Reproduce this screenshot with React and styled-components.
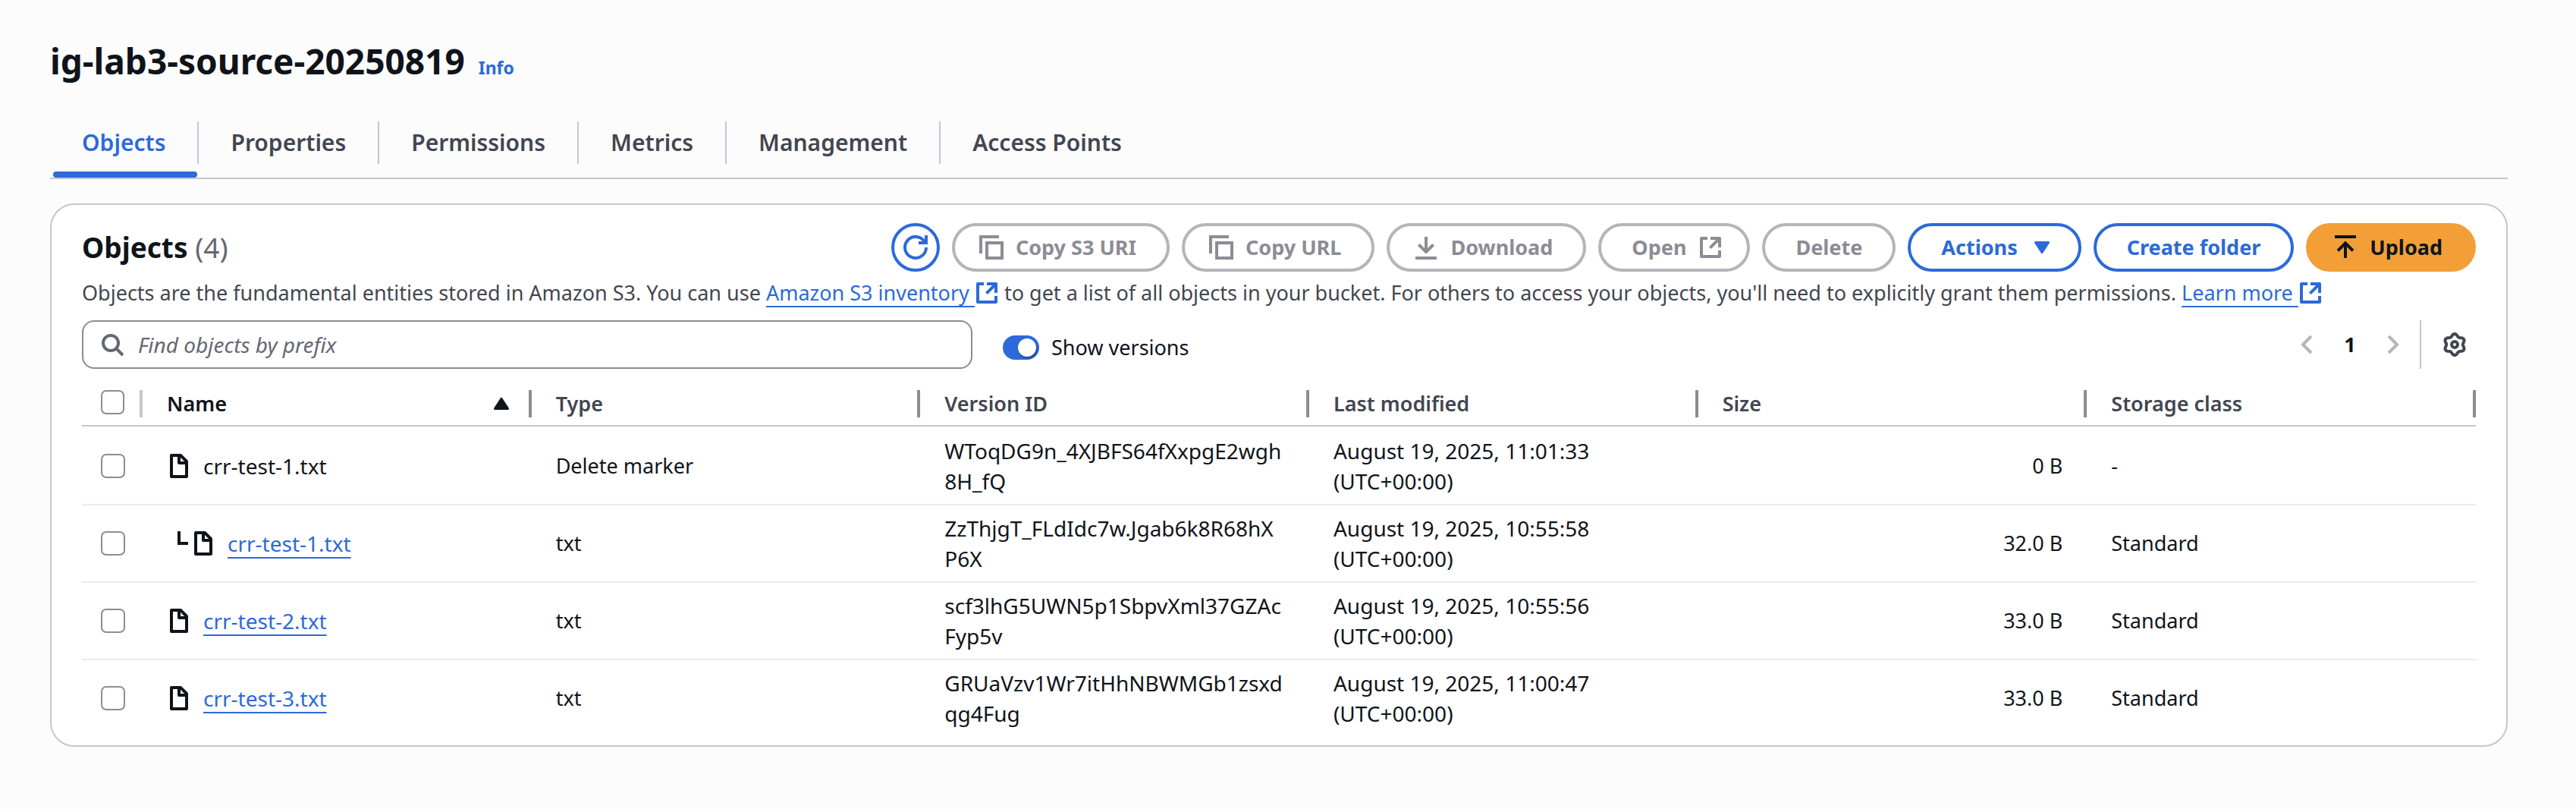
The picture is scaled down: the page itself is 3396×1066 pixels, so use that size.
import React, { useState } from "react";
import styled, { createGlobalStyle, css } from "styled-components";

const color = {
  page: "#fcfcfd",
  panel: "#ffffff",
  ink: "#0f141a",
  body: "#424650",
  muted: "#656871",
  blue: "#2c6ad9",
  orange: "#f29f38",
  line: "#c6c6cd",
  rowLine: "#ebebf0",
  control: "#8c8c94",
  disabledLine: "#b4b4bb",
};

const GlobalStyle = createGlobalStyle`
  *, *::before, *::after { box-sizing: border-box; }
  body {
    margin: 0;
    background: ${color.page};
    color: ${color.ink};
    font-family: "Noto Sans", "Open Sans", sans-serif;
    font-size: 27px;
    font-weight: 420;
    line-height: 40px;
  }
  button, input { font: inherit; color: inherit; }
`;

const Page = styled.main`
  padding: 50px 90px 82px 66px;
`;

const TitleRow = styled.header`
  display: flex;
  align-items: baseline;
  gap: 18px;
`;

const Title = styled.h1`
  margin: 0;
  font-size: 46px;
  line-height: 60px;
  font-weight: 700;
`;

const InfoLink = styled.a`
  color: ${color.blue};
  font-size: 23px;
  font-weight: 700;
  text-decoration: none;
`;

const TabList = styled.nav`
  display: flex;
  margin-top: 50px;
  border-bottom: 2px solid ${color.line};
`;

const TabLabel = styled.span`
  display: block;
  padding: 0 42px;
  line-height: 56px;
  border-right: 2px solid ${color.line};
`;

const Tab = styled.button`
  position: relative;
  padding: 0 0 18px;
  border: 0;
  background: none;
  color: ${(p) => (p.$active ? color.blue : color.body)};
  font-size: 30px;
  font-weight: 650;

  &:last-child ${TabLabel} {
    border-right: 0;
  }

  ${(p) =>
    p.$active &&
    css`
      &::after {
        content: "";
        position: absolute;
        left: 4px;
        right: 2px;
        bottom: 0;
        height: 8px;
        border-radius: 4px;
        background: ${color.blue};
      }
    `}
`;

const Panel = styled.section`
  margin-top: 32px;
  padding: 24px 40px 12px;
  border: 2px solid ${color.line};
  border-radius: 32px;
  background: ${color.panel};
`;

const PanelHeader = styled.div`
  display: flex;
  justify-content: space-between;
  align-items: center;
`;

const PanelTitle = styled.h2`
  margin: 0;
  font-size: 37px;
  line-height: 64px;
  font-weight: 700;
`;

const Count = styled.span`
  color: ${color.muted};
  font-weight: 400;
`;

const Actions = styled.div`
  display: flex;
  gap: 16px;
`;

const Button = styled.button`
  display: inline-flex;
  align-items: center;
  gap: 16px;
  height: 64px;
  padding: 0 ${(p) => (p.$iconEnd ? 32 : 40)}px 0 ${(p) => (p.$iconStart ? 32 : 40)}px;
  border: 4px solid ${color.blue};
  border-radius: 32px;
  background: ${color.panel};
  color: ${color.blue};
  font-weight: 700;
  white-space: nowrap;

  &:disabled {
    border-color: ${color.disabledLine};
    color: ${color.control};
  }

  ${(p) =>
    p.$primary &&
    css`
      border-color: ${color.orange};
      background: ${color.orange};
      color: ${color.ink};
    `}
`;

const RoundButton = styled(Button)`
  justify-content: center;
  width: 64px;
  padding: 0;
`;

const Description = styled.p`
  margin: 8px 0 16px;
  color: ${color.body};
`;

const Link = styled.a`
  color: ${color.blue};
  text-decoration: none;
`;

const LinkText = styled.span`
  text-decoration: underline;
  text-decoration-thickness: 2px;
  text-decoration-skip-ink: none;
  text-underline-offset: 7px;
`;

const Svg = styled.svg`
  flex: none;
  width: 32px;
  height: 32px;
  fill: none;
  stroke: currentColor;
  stroke-width: 2;
`;

const InlineSvg = styled(Svg)`
  vertical-align: -6px;
`;

const Tools = styled.div`
  display: flex;
  align-items: flex-start;
`;

const SearchBox = styled.label`
  display: flex;
  align-items: center;
  gap: 18px;
  flex: 0 1 1174px;
  height: 64px;
  padding: 0 22px;
  border: 2px solid ${color.control};
  border-radius: 16px;
  color: ${color.muted};
`;

const SearchInput = styled.input`
  flex: 1;
  min-width: 0;
  padding: 0;
  border: 0;
  outline: 0;
  background: none;
  font-size: 28px;

  &::placeholder {
    color: ${color.muted};
    font-style: italic;
    opacity: 1;
  }
`;

const ToggleLabel = styled.label`
  display: flex;
  align-items: center;
  gap: 16px;
  margin: 16px 0 0 40px;
`;

const Toggle = styled.input`
  appearance: none;
  display: flex;
  align-items: center;
  width: 48px;
  height: 32px;
  margin: 0;
  padding: 0 4px;
  border-radius: 16px;
  background: ${color.control};

  &::before {
    content: "";
    width: 24px;
    height: 24px;
    border-radius: 50%;
    background: ${color.panel};
    box-shadow: 1px 2px 2px rgba(15, 20, 26, 0.45);
  }

  &:checked {
    justify-content: flex-end;
    background: ${color.blue};
  }
`;

const Pager = styled.div`
  display: flex;
  align-items: center;
  height: 64px;
  margin-left: auto;
`;

const IconButton = styled.button`
  display: flex;
  padding: 0 12px;
  border: 0;
  background: none;
  color: ${color.body};

  &:disabled {
    color: ${color.disabledLine};
  }
`;

const PageNumber = styled.button`
  width: 60px;
  padding: 0;
  border: 0;
  background: none;
  font-weight: 700;
`;

const Divider = styled.span`
  width: 2px;
  height: 64px;
  margin: 0 16px 0 6px;
  background: ${color.line};
`;

const Table = styled.table`
  width: 100%;
  margin-top: 16px;
  table-layout: fixed;
  border-collapse: separate;
  border-spacing: 0;
`;

const CheckCol = styled.col`
  width: 80px;
`;

const HeadCell = styled.th`
  padding: 12px 0 10px;
  border-bottom: 2px solid ${color.line};
  color: ${(p) => (p.$sorted ? color.ink : color.body)};
  font-weight: 650;
  text-align: left;
`;

const HeadInner = styled.div`
  display: flex;
  align-items: ${(p) => (p.$check ? "flex-start" : "center")};
  justify-content: space-between;
  height: 36px;
  padding: 0 20px 0 ${(p) => (p.$check ? 25 : 32)}px;
  border-right: 4px solid ${(p) => (p.$check ? color.line : color.control)};
  line-height: 36px;
`;

const Row = styled.tr``;

const Cell = styled.td`
  padding: 10px 32px;
  border-bottom: 2px solid ${color.rowLine};
  text-align: ${(p) => (p.$end ? "right" : "left")};
  vertical-align: middle;

  ${Row}:first-child > & {
    padding-top: 12px;
  }

  ${Row}:last-child > & {
    border-bottom: 0;
  }
`;

const CheckCell = styled(Cell)`
  padding-left: 25px;
  padding-right: 0;
`;

const WideCell = styled(Cell)`
  font-size: 28px;
`;

const Checkbox = styled.input`
  appearance: none;
  display: block;
  width: 32px;
  height: 32px;
  margin: 0;
  border: 2px solid ${color.control};
  border-radius: 7px;
  background: ${color.panel};

  &:checked {
    border-color: ${color.blue};
    background: ${color.blue};
  }
`;

const FileName = styled.div`
  display: flex;
  align-items: center;
  font-size: 28px;
`;

const NameText = styled.span`
  margin-left: 16px;
`;

const shapes = {
  refresh: "M15 8a7 7 0 1 1-1.1-3.8M10 5h5V0",
  copy: "M13 1H1v11M5 5h10v10H5z",
  download: "M8 1v10M3.2 6.2 8 11l4.8-4.8M1 15h14",
  upload: "M1 1h14M8 15V5.5M3 10.2l5-5 5 5",
  external: "M6 2H2v12h12v-4M8 2h6v6M14 2 7.7 8.3",
  search: "M12 7A5 5 0 1 1 2 7a5 5 0 0 1 10 0zM10.5 10.5 15 15",
  prev: "M11.5 2.5 6 8l5.5 5.5",
  next: "M4.5 2.5 10 8l-5.5 5.5",
  file: "M3 1h6l4 4v10H3zM8 1v5h5",
  branch: "M8 0v8h6",
};

function Icon({ name, as: Shape = Svg }) {
  return (
    <Shape viewBox="0 0 16 16" aria-hidden="true">
      <path d={shapes[name]} strokeLinejoin={name === "file" || name === "external" ? "round" : "miter"} />
    </Shape>
  );
}

function Triangle({ down }) {
  return (
    <Svg viewBox="0 0 16 16" aria-hidden="true">
      <path
        d={down ? "M3.7 4.7h8.6L8 11.4z" : "M3.7 11.3h8.6L8 4.6z"}
        fill="currentColor"
        strokeWidth="1.4"
        strokeLinejoin="round"
      />
    </Svg>
  );
}

const gearPath =
  Array.from({ length: 73 }, (_, i) => {
    const a = (i * 5 * Math.PI) / 180;
    const r = 6.2 + 0.8 * Math.cos(6 * a);
    return `${i ? "L" : "M"}${(8 + r * Math.sin(a)).toFixed(2)} ${(8 - r * Math.cos(a)).toFixed(2)}`;
  }).join("") + "Z";

function Gear() {
  return (
    <Svg viewBox="0 0 16 16" aria-hidden="true">
      <path d={gearPath} strokeLinejoin="round" />
      <circle cx="8" cy="8" r="2" />
    </Svg>
  );
}

function ExternalLink({ children }) {
  return (
    <Link href="#">
      <LinkText>{children}&nbsp;</LinkText>
      <Icon name="external" as={InlineSvg} />
    </Link>
  );
}

const tabs = ["Objects", "Properties", "Permissions", "Metrics", "Management", "Access Points"];

const columns = ["Name", "Type", "Version ID", "Last modified", "Size", "Storage class"];

const objects = [
  { name: "crr-test-1.txt", type: "Delete marker", version: ["WToqDG9n_4XJBFS64fXxpgE2wgh", "8H_fQ"], time: "11:01:33", size: "0 B", storage: "-", marker: true },
  { name: "crr-test-1.txt", type: "txt", version: ["ZzThjgT_FLdIdc7w.Jgab6k8R68hX", "P6X"], time: "10:55:58", size: "32.0 B", storage: "Standard", nested: true },
  { name: "crr-test-2.txt", type: "txt", version: ["scf3lhG5UWN5p1SbpvXml37GZAc", "Fyp5v"], time: "10:55:56", size: "33.0 B", storage: "Standard" },
  { name: "crr-test-3.txt", type: "txt", version: ["GRUaVzv1Wr7itHhNBWMGb1zsxd", "qg4Fug"], time: "11:00:47", size: "33.0 B", storage: "Standard" },
];

function ObjectRow({ item }) {
  return (
    <Row>
      <CheckCell>
        <Checkbox type="checkbox" aria-label={`Select ${item.name}`} />
      </CheckCell>
      <Cell>
        <FileName>
          {item.nested && <Icon name="branch" />}
          <Icon name="file" />
          <NameText>
            {item.marker ? (
              item.name
            ) : (
              <Link href="#">
                <LinkText>{item.name}</LinkText>
              </Link>
            )}
          </NameText>
        </FileName>
      </Cell>
      <Cell>{item.type}</Cell>
      <WideCell>
        {item.version[0]}
        <br />
        {item.version[1]}
      </WideCell>
      <WideCell>
        August 19, 2025, {item.time}
        <br />
        (UTC+00:00)
      </WideCell>
      <Cell $end>{item.size}</Cell>
      <Cell>{item.storage}</Cell>
    </Row>
  );
}

export default function App() {
  const [active, setActive] = useState("Objects");
  const [versions, setVersions] = useState(true);

  return (
    <>
      <GlobalStyle />
      <Page>
        <TitleRow>
          <Title>ig-lab3-source-20250819</Title>
          <InfoLink href="#">Info</InfoLink>
        </TitleRow>

        <TabList>
          {tabs.map((tab) => (
            <Tab key={tab} type="button" $active={tab === active} onClick={() => setActive(tab)}>
              <TabLabel>{tab}</TabLabel>
            </Tab>
          ))}
        </TabList>

        <Panel>
          <PanelHeader>
            <PanelTitle>
              Objects <Count>(4)</Count>
            </PanelTitle>
            <Actions>
              <RoundButton type="button" aria-label="Refresh">
                <Icon name="refresh" />
              </RoundButton>
              <Button type="button" disabled $iconStart>
                <Icon name="copy" />
                Copy S3 URI
              </Button>
              <Button type="button" disabled $iconStart>
                <Icon name="copy" />
                Copy URL
              </Button>
              <Button type="button" disabled $iconStart>
                <Icon name="download" />
                Download
              </Button>
              <Button type="button" disabled $iconEnd>
                Open
                <Icon name="external" />
              </Button>
              <Button type="button" disabled>
                Delete
              </Button>
              <Button type="button" $iconEnd>
                Actions
                <Triangle down />
              </Button>
              <Button type="button">Create folder</Button>
              <Button type="button" $primary $iconStart>
                <Icon name="upload" />
                Upload
              </Button>
            </Actions>
          </PanelHeader>

          <Description>
            Objects are the fundamental entities stored in Amazon S3. You can use{" "}
            <ExternalLink>Amazon S3 inventory</ExternalLink> to get a list of all objects in your bucket. For others to
            access your objects, you'll need to explicitly grant them permissions.{" "}
            <ExternalLink>Learn more</ExternalLink>
          </Description>

          <Tools>
            <SearchBox>
              <Icon name="search" />
              <SearchInput type="text" aria-label="Find objects" placeholder="Find objects by prefix" />
            </SearchBox>
            <ToggleLabel>
              <Toggle type="checkbox" checked={versions} onChange={(e) => setVersions(e.target.checked)} />
              Show versions
            </ToggleLabel>
            <Pager>
              <IconButton type="button" disabled aria-label="Previous page">
                <Icon name="prev" />
              </IconButton>
              <PageNumber type="button">1</PageNumber>
              <IconButton type="button" disabled aria-label="Next page">
                <Icon name="next" />
              </IconButton>
              <Divider />
              <IconButton type="button" aria-label="Preferences">
                <Gear />
              </IconButton>
            </Pager>
          </Tools>

          <Table>
            <colgroup>
              <CheckCol />
              {columns.map((name) => (
                <col key={name} />
              ))}
            </colgroup>
            <thead>
              <tr>
                <HeadCell>
                  <HeadInner $check>
                    <Checkbox type="checkbox" aria-label="Select all objects" />
                  </HeadInner>
                </HeadCell>
                {columns.map((name) => (
                  <HeadCell key={name} scope="col" $sorted={name === "Name"}>
                    <HeadInner>
                      {name}
                      {name === "Name" && <Triangle />}
                    </HeadInner>
                  </HeadCell>
                ))}
              </tr>
            </thead>
            <tbody>
              {objects.map((item) => (
                <ObjectRow key={item.version[0]} item={item} />
              ))}
            </tbody>
          </Table>
        </Panel>
      </Page>
    </>
  );
}
